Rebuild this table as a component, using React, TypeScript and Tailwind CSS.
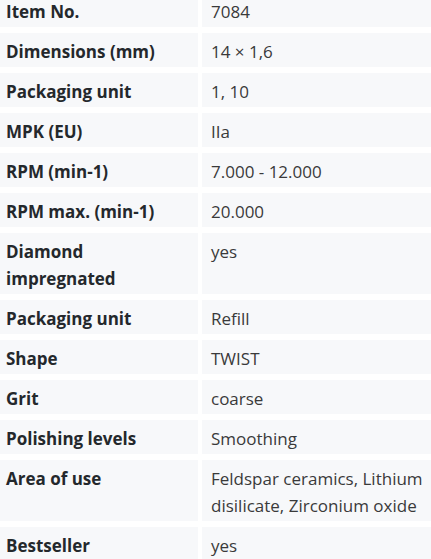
const specs: [string, string][] = [
  ["Item No.", "7084"],
  ["Dimensions (mm)", "14 × 1,6"],
  ["Packaging unit", "1, 10"],
  ["MPK (EU)", "IIa"],
  ["RPM (min-1)", "7.000 - 12.000"],
  ["RPM max. (min-1)", "20.000"],
  ["Diamond impregnated", "yes"],
  ["Packaging unit", "Refill"],
  ["Shape", "TWIST"],
  ["Grit", "coarse"],
  ["Polishing levels", "Smoothing"],
  ["Area of use", "Feldspar ceramics, Lithium disilicate, Zirconium oxide"],
  ["Bestseller", "yes"],
];

export default function App() {
  return (
    <div className="h-[559px] overflow-hidden bg-white font-['Open_Sans',sans-serif] text-[17px] leading-[27px]">
      <div className="-mt-[7px] grid grid-cols-[198px_1fr] gap-x-[4px] gap-y-[6px]">
        {specs.map(([label, value], i) => (
          <div key={i} className="contents">
            <div className="bg-[#f7f8fa] pl-[6px] pr-[28px] pt-[5px] pb-[2px] font-bold text-[#24282c]">
              {label}
            </div>
            <div className="bg-[#f7f8fa] pl-[9px] pr-[4px] pt-[5px] pb-[2px] text-[#3a3a3a]">
              {value}
            </div>
          </div>
        ))}
      </div>
    </div>
  );
}
